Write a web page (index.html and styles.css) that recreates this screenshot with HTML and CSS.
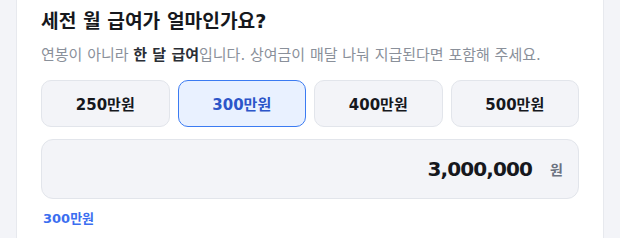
FILE: index.html
```html
<!DOCTYPE html>
<html lang="ko">
<head>
    <meta charset="UTF-8">
    <meta name="viewport" content="width=device-width, initial-scale=1.0">
    <title>세전 월 급여</title>
    <link rel="stylesheet" href="styles.css">
</head>
<body>

    <!-- Salary step card -->
    <div class="card">
        <h2 class="title">세전 월 급여가 얼마인가요?</h2>
        <p class="hint">연봉이 아니라 <strong>한 달 급여</strong>입니다. 상여금이 매달 나눠 지급된다면 포함해 주세요.</p>

        <div class="presets">
            <button type="button">250만원</button>
            <button type="button" class="active">300만원</button>
            <button type="button">400만원</button>
            <button type="button">500만원</button>
        </div>

        <div class="amount">
            <span class="amount-value">3,000,000</span>
            <span class="amount-unit">원</span>
        </div>

        <div class="amount-note">300만원</div>
    </div>

</body>
</html>
```

FILE: styles.css
```css
body {
    margin: 0;
    background: #f3f4f8;
    font-family: "DejaVu Sans", "Noto Sans CJK KR", sans-serif;
    color: #16181d;
}

.card {
    width: 538px;
    margin-left: 16px;
    padding: 9px 24px 40px;
    background: #fff;
    border: 1px solid #e7e9ee;
    border-top: none;
}

.title {
    margin: 0;
    font-size: 19.2px;
    line-height: 26px;
    font-weight: bold;
}

.hint {
    margin: 9px 0 0;
    font-size: 15px;
    line-height: 22px;
    color: #8a909a;
}

.hint strong {
    color: #2a2e35;
}

.presets {
    display: grid;
    grid-template-columns: repeat(4, 1fr);
    gap: 8px;
    margin-top: 14px;
}

.presets button {
    height: 47px;
    border: 1px solid #e2e5eb;
    border-radius: 10px;
    background: #f3f4f8;
    font-family: inherit;
    font-size: 15px;
    font-weight: bold;
    color: #16181d;
}

.presets button.active {
    border-color: #3b7bf2;
    background: #e9f1ff;
    color: #2c55c9;
}

.amount {
    display: flex;
    align-items: center;
    justify-content: flex-end;
    gap: 18px;
    height: 58px;
    margin-top: 12px;
    padding: 0 15px;
    border: 1px solid #e2e5eb;
    border-radius: 12px;
    background: #f3f4f8;
}

.amount-value {
    font-size: 20px;
    font-weight: bold;
    letter-spacing: -0.9px;
}

.amount-unit {
    font-size: 14px;
    font-weight: bold;
    color: #6b7280;
}

.amount-note {
    margin: 9px 0 0 2px;
    font-size: 13px;
    font-weight: bold;
    color: #3b6ef0;
}
```
